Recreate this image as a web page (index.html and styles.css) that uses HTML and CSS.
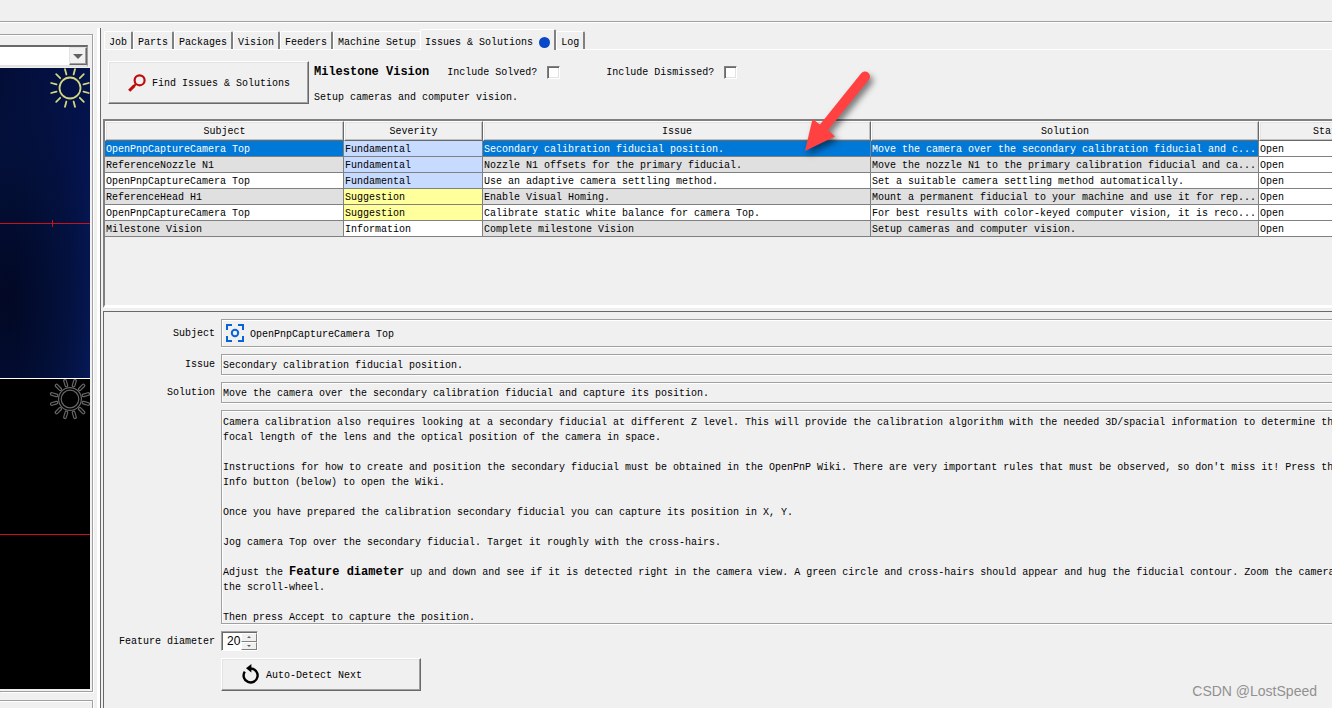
FILE: index.html
```html
<!DOCTYPE html>
<html lang="en">
<head>
<meta charset="utf-8">
<title>OpenPnP - Issues &amp; Solutions</title>
<link rel="stylesheet" href="styles.css">
</head>
<body>
<header class="toolbar"></header>
<div class="workspace">
  <aside class="cameras">
    <section class="camera-panel">
      <div class="camera-picker">
        <select class="camera-select" aria-label="Camera"><option></option></select>
        <span class="picker-arrow"></span>
      </div>
      <div class="views">
        <div class="view view-top">
          <svg class="sun" viewBox="-20 -20 40 40" fill="none" stroke="#d2d67c" stroke-width="1.8" stroke-linecap="round">
            <circle r="10.5"/>
            <path d="M3.6-13.5 5-18.8M9.8-9.8 13.8-13.8M13.5-3.6 18.8-5M13.5 3.6 18.8 5M9.8 9.8 13.8 13.8M3.6 13.5 5 18.8M-3.6 13.5-5 18.8M-9.8 9.8-13.8 13.8M-13.5 3.6-18.8 5M-13.5-3.6-18.8-5M-9.8-9.8-13.8-13.8M-3.6-13.5-5-18.8"/>
          </svg>
          <span class="reticle tick"></span>
        </div>
        <div class="view view-bottom">
          <svg class="sun" viewBox="-20 -20 40 40" fill="none" stroke-linecap="round">
            <path d="M3.6-13.5 5-18.2M9.8-9.8 13.4-13.4M13.5-3.6 18.2-5M13.5 3.6 18.2 5M9.8 9.8 13.4 13.4M3.6 13.5 5 18.2M-3.6 13.5-5 18.2M-9.8 9.8-13.4 13.4M-13.5 3.6-18.2 5M-13.5-3.6-18.2-5M-9.8-9.8-13.4-13.4M-3.6-13.5-5-18.2" stroke="#666" stroke-width="3.8"/>
            <path d="M3.6-13.5 5-18.2M9.8-9.8 13.4-13.4M13.5-3.6 18.2-5M13.5 3.6 18.2 5M9.8 9.8 13.4 13.4M3.6 13.5 5 18.2M-3.6 13.5-5 18.2M-9.8 9.8-13.4 13.4M-13.5 3.6-18.2 5M-13.5-3.6-18.2-5M-9.8-9.8-13.4-13.4M-3.6-13.5-5-18.2" stroke="#000" stroke-width="1.4"/>
            <circle r="11.4" stroke="#666" stroke-width="1.2"/>
            <circle r="8.8" stroke="#666" stroke-width="1.2"/>
          </svg>
          <span class="reticle"></span>
        </div>
      </div>
    </section>
    <section class="next-panel"></section>
  </aside>
  <main class="main">
    <nav class="tabs" role="tablist">
      <button class="tab" role="tab">Job</button>
      <button class="tab" role="tab">Parts</button>
      <button class="tab" role="tab">Packages</button>
      <button class="tab" role="tab">Vision</button>
      <button class="tab" role="tab">Feeders</button>
      <button class="tab" role="tab">Machine Setup</button>
      <button class="tab tab-active" role="tab" aria-selected="true">Issues &amp; Solutions<span class="dot"></span></button>
      <button class="tab" role="tab">Log</button>
    </nav>
    <div class="finder">
      <button class="push find-button">
        <svg class="find-icon" viewBox="0 0 18 18" fill="none" stroke="#c00b0b">
          <circle cx="11.6" cy="6.3" r="5" stroke-width="2.2"/>
          <path d="M7.8 10.2 6 12" stroke-width="2"/>
          <path d="M6.4 11.6 1.2 16.8" stroke-width="3"/>
        </svg>
        Find Issues &amp; Solutions
      </button>
      <div class="milestone">
        <div class="milestone-row">
          <strong class="milestone-name">Milestone Vision</strong>
          <label class="check">Include Solved?<input class="box" type="checkbox"></label>
          <label class="check check-last">Include Dismissed?<input class="box" type="checkbox"></label>
        </div>
        <div class="milestone-text">Setup cameras and computer vision.</div>
      </div>
    </div>
    <div class="table-pane">
      <table class="issues">
        <colgroup><col class="c-subject"><col class="c-short"><col class="c-long"><col class="c-long"><col class="c-status"></colgroup>
        <thead><tr><th>Subject</th><th>Severity</th><th>Issue</th><th>Solution</th><th>Status</th></tr></thead>
        <tbody>
          <tr class="selected"><td>OpenPnpCaptureCamera Top</td><td class="fundamental">Fundamental</td><td>Secondary calibration fiducial position.</td><td>Move the camera over the secondary calibration fiducial and c...</td><td class="status">Open</td></tr>
          <tr><td>ReferenceNozzle N1</td><td class="fundamental">Fundamental</td><td>Nozzle N1 offsets for the primary fiducial.</td><td>Move the nozzle N1 to the primary calibration fiducial and ca...</td><td class="status">Open</td></tr>
          <tr><td>OpenPnpCaptureCamera Top</td><td class="fundamental">Fundamental</td><td>Use an adaptive camera settling method.</td><td>Set a suitable camera settling method automatically.</td><td class="status">Open</td></tr>
          <tr><td>ReferenceHead H1</td><td class="suggestion">Suggestion</td><td>Enable Visual Homing.</td><td>Mount a permanent fiducial to your machine and use it for rep...</td><td class="status">Open</td></tr>
          <tr><td>OpenPnpCaptureCamera Top</td><td class="suggestion">Suggestion</td><td>Calibrate static white balance for camera Top.</td><td>For best results with color-keyed computer vision, it is reco...</td><td class="status">Open</td></tr>
          <tr><td>Milestone Vision</td><td class="information">Information</td><td>Complete milestone Vision</td><td>Setup cameras and computer vision.</td><td class="status">Open</td></tr>
        </tbody>
      </table>
    </div>
    <form class="details">
      <label class="caption" for="subject">Subject</label>
      <output class="field subject-field" id="subject">
        <svg class="camera-icon" viewBox="0 0 18 18" fill="none" stroke="#0a62d8" stroke-width="2">
          <path d="M1 6V1H6M12 1H17V6M17 12V17H12M6 17H1V12"/>
          <circle cx="9" cy="9" r="3.2"/>
        </svg>
        OpenPnpCaptureCamera Top
      </output>
      <label class="caption" for="issue">Issue</label>
      <output class="field" id="issue">Secondary calibration fiducial position.</output>
      <label class="caption" for="solution">Solution</label>
      <output class="field" id="solution">Move the camera over the secondary calibration fiducial and capture its position.</output>
      <div class="field description">
        <p>Camera calibration also requires looking at a secondary fiducial at different Z level. This will provide the calibration algorithm with the needed 3D/spacial information to determine th<br>focal length of the lens and the optical position of the camera in space.</p>
        <p>Instructions for how to create and position the secondary fiducial must be obtained in the OpenPnP Wiki. There are very important rules that must be observed, so don't miss it! Press th<br>Info button (below) to open the Wiki.</p>
        <p>Once you have prepared the calibration secondary fiducial you can capture its position in X, Y.</p>
        <p>Jog camera Top over the secondary fiducial. Target it roughly with the cross-hairs.</p>
        <p>Adjust the <strong>Feature diameter</strong> up and down and see if it is detected right in the camera view. A green circle and cross-hairs should appear and hug the fiducial contour. Zoom the camera<br>the scroll-wheel.</p>
        <p>Then press Accept to capture the position.</p>
      </div>
      <label class="caption" for="diameter">Feature diameter</label>
      <div class="spinner">
        <input class="spinner-value" id="diameter" type="text" value="20">
        <span class="spinner-buttons">
          <button class="step" type="button" aria-label="Increase"><span class="step-up"></span></button>
          <button class="step" type="button" aria-label="Decrease"><span class="step-down"></span></button>
        </span>
      </div>
      <button class="push detect-button" type="button">
        <svg class="detect-icon" viewBox="0 0 18 20" fill="none">
          <path d="M8.500 4.500A7 7 0 1 1 2.800 7.600" stroke="#000" stroke-width="2.4"/>
          <path d="M9.4 0V8.400L4 4.200Z" fill="#000"/>
        </svg>
        Auto-Detect Next
      </button>
    </form>
  </main>
</div>
<svg class="pointer" viewBox="0 0 80 96">
  <path d="M5 87 12.500 55 20 60.500 61 9.500A5 5 0 0 1 69 15.500L28 66 35 72.500Z" fill="#ff4141"/>
</svg>
<div class="watermark">CSDN @LostSpeed</div>
</body>
</html>
```
FILE: styles.css
```css
* { box-sizing: border-box; }

body {
  margin: 0;
  height: 100vh;
  display: flex;
  flex-direction: column;
  position: relative;
  overflow: hidden;
  background: #f0f0f0;
  color: #000;
  font: 10px/15px "Liberation Mono", monospace;
  white-space: nowrap;
}

button, input, select { font: inherit; color: inherit; margin: 0; padding: 0; border-radius: 0; }
p { margin: 0 0 15px; }
strong { font-size: 12px; }
svg { display: block; flex: none; }

.toolbar {
  flex: none;
  height: 23px;
  border-bottom: 1px solid #fff;
  box-shadow: inset 0 -1px #a0a0a0;
}

.workspace { flex: 1; min-height: 0; display: flex; padding-top: 5px; }

/* Camera column */
.cameras {
  flex: none;
  width: 100px;
  padding: 6px 4px 0 0;
  display: flex;
  flex-direction: column;
  gap: 8px;
  border-right: 3px solid #fff;
}
.camera-panel {
  padding: 10px 2px 2px 0;
  border: 1px solid #a0a0a0;
  border-left: 0;
  box-shadow: 1px 1px #fff, inset 0 1px #fff;
}
.camera-picker { position: relative; height: 22px; width: 88px; }
.camera-select {
  display: block;
  width: 88px;
  height: 22px;
  appearance: none;
  background: #fff;
  border: 2px solid #696969;
  border-left: 0;
  border-bottom-color: #e3e3e3;
  border-right: 1px solid #a0a0a0;
}
.picker-arrow {
  position: absolute;
  top: 2px;
  right: 1px;
  width: 18px;
  height: 18px;
  background: #f0f0f0;
  border: 1px solid;
  border-color: #e3e3e3 #696969 #696969 #e3e3e3;
  box-shadow: inset -1px -1px #a0a0a0;
  pointer-events: none;
}
.picker-arrow::after {
  content: "";
  position: absolute;
  top: 6px;
  left: 3px;
  border: 5px solid transparent;
  border-top-color: #606060;
  border-bottom: 0;
}
.views { margin-top: 1px; width: 90px; display: flex; flex-direction: column; }
.view { position: relative; height: 310px; overflow: hidden; }
.view-top {
  background: radial-gradient(ellipse at 10% 75%, #020824 0, #03103a 45%, transparent 75%), linear-gradient(100deg, #030d36, #04124a 60%, #061a58);
}
.view-bottom { background: #000; height: 311px; border-top: 1px solid #fff; }
.sun { position: absolute; top: 0; left: 50px; width: 40px; height: 40px; overflow: visible; }
.reticle { position: absolute; left: 0; right: 0; top: 155px; height: 1px; background: #cc0f18; }
.tick::after { content: ""; position: absolute; left: 52px; top: -3px; width: 1px; height: 7px; background: #cc0f18; }
.next-panel {
  flex: 1;
  border-top: 1px solid #a0a0a0;
  border-right: 1px solid #a0a0a0;
  box-shadow: 1px 0 #fff, inset 0 1px #fff;
}

/* Tabs */
.main {
  flex: 1;
  min-width: 0;
  padding-left: 3px;
  display: flex;
  flex-direction: column;
  border-left: 1px solid #696969;
}
.tabs {
  flex: none;
  height: 22px;
  display: flex;
  align-items: flex-end;
  box-shadow: inset 0 -1px #fff;
}
.tab {
  height: 18px;
  margin-bottom: 1px;
  padding: 3px 4px 0;
  display: flex;
  align-items: center;
  gap: 6px;
  background: #f0f0f0;
  border: 0;
  border-top: 1px solid #fff;
  border-left: 1px solid #fff;
  border-right: 2px solid #808080;
  border-radius: 2px 2px 0 0;
}
.tab-active { height: 21px; margin: 0 0 0 -2px; padding-top: 4px; position: relative; }
.dot { width: 11px; height: 11px; border-radius: 50%; background: #0748c8; }

.push {
  display: flex;
  align-items: center;
  padding-top: 2px;
  background: #f0f0f0;
  border: 1px solid;
  border-color: #fff #696969 #696969 #fff;
  box-shadow: inset -1px -1px #a0a0a0, inset 1px 1px #e3e3e3;
}

.finder { flex: none; display: flex; gap: 5px; padding: 11px 4px 14px; }
.find-button { width: 201px; height: 43px; padding-left: 19px; gap: 6px; }
.find-icon { width: 18px; height: 18px; margin-bottom: 2px; }
.milestone { display: flex; flex-direction: column; gap: 10px; padding-top: 3px; }
.milestone-row { display: flex; align-items: center; padding-top: 1px; }
.check { display: flex; align-items: center; gap: 10px; margin-left: 18px; }
.check-last { margin-left: 46px; }
.box {
  appearance: none;
  width: 13px;
  height: 13px;
  background: #fff;
  border: 1px solid;
  border-color: #808080 #fff #fff #808080;
  box-shadow: inset 1px 1px #696969, inset -1px -1px #e3e3e3;
}

/* Issue list */
.table-pane {
  flex: none;
  height: 189px;
  margin-left: -1px;
  overflow: hidden;
  border-top: 2px solid #808080;
  border-left: 2px solid #808080;
  border-bottom: 3px solid #fff;
}
.issues { width: 1298px; table-layout: fixed; border-collapse: separate; border-spacing: 0; }
.c-subject { width: 239px; }
.c-short { width: 139px; }
.c-long { width: 388px; }
.c-status { width: 144px; }
.issues th {
  height: 20px;
  padding: 0;
  font-weight: 400;
  border: 1px solid;
  border-color: #fff #696969 #696969 #fff;
  box-shadow: inset -1px -1px #c0c0c0, inset 1px 1px #e3e3e3;
}
.issues td {
  height: 16px;
  padding: 2px 1px 0;
  line-height: 13px;
  overflow: hidden;
  background: #fff;
  border-right: 1px solid #808080;
  border-bottom: 1px solid #808080;
}
.issues tr:nth-child(even) td { background: #e0e0e0; }
.issues .selected td { background: #0078d7; color: #fff; }
.issues tr td.fundamental { background: #c6dbff; color: #000; }
.issues tr td.suggestion { background: #ffff9c; }
.issues tr td.information, .issues tr td.status { background: #fff; color: #000; }

/* Selected issue */
.details {
  flex: 1;
  margin: 3px 0 0 -1px;
  padding: 7px 0 0 4px;
  display: grid;
  grid-template-columns: 107px 1fr;
  column-gap: 6px;
  row-gap: 7px;
  align-content: start;
  align-items: center;
  border-top: 1px solid #696969;
  border-left: 1px solid #696969;
}
.caption { text-align: right; }
.field {
  min-width: 0;
  height: 21px;
  padding: 1px 1px 0;
  margin-right: -4px;
  display: flex;
  align-items: center;
  overflow: hidden;
  border: 1px solid #a0a0a0;
  box-shadow: inset 1px 1px #fff, 0 1px #fff;
}
.subject-field { height: 28px; padding: 2px 0 0 4px; gap: 6px; }
.camera-icon { width: 18px; height: 18px; margin-bottom: 2px; }
.description { grid-column: 2; display: block; height: 214px; padding-top: 4px; }
.description strong { line-height: 10px; }
.spinner {
  width: 37px;
  height: 20px;
  display: flex;
  background: #fff;
  border: 1px solid;
  border-color: #a0a0a0 #fff #fff #a0a0a0;
  box-shadow: inset 1px 1px #696969;
}
.spinner-value {
  width: 19px;
  border: 0;
  background: transparent;
  padding-left: 5px;
  font: 12px/15px "Liberation Sans", sans-serif;
}
.spinner-buttons { flex: 1; display: flex; flex-direction: column; padding-top: 1px; }
.step {
  flex: 1;
  display: grid;
  place-items: center;
  background: #f0f0f0;
  border: 1px solid;
  border-color: #fff #808080 #808080 #fff;
}
.step-up, .step-down { border: 2px solid transparent; }
.step-up { border-bottom-color: #606060; border-top: 0; }
.step-down { border-top-color: #606060; border-bottom: 0; }
.detect-button { grid-column: 2; width: 200px; height: 33px; padding-left: 20px; gap: 6px; }
.detect-icon { width: 18px; height: 20px; margin-bottom: 3px; }

/* Annotations over the window */
.pointer {
  position: absolute;
  left: 800px;
  top: 64px;
  width: 80px;
  height: 96px;
  overflow: visible;
  filter: drop-shadow(3px 4px 3px rgba(0, 0, 0, .5));
}
.watermark {
  position: absolute;
  right: 15px;
  bottom: 9px;
  color: #909090;
  font: 14px/16px "Liberation Sans", sans-serif;
}
```
